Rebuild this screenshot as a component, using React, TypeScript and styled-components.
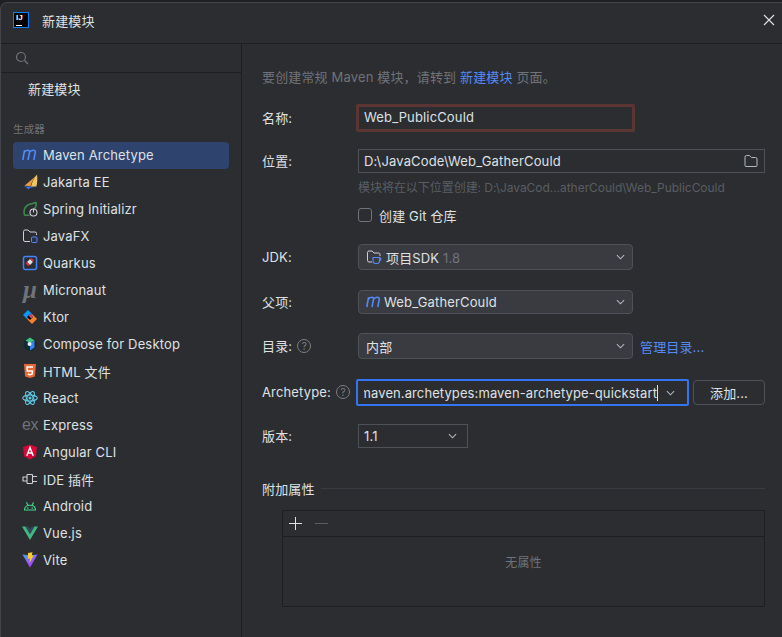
import React from 'react';
import styled, {createGlobalStyle} from 'styled-components';

const GlobalStyle = createGlobalStyle`
  html, body {
    margin: 0;
    height: 100%;
    overflow: hidden;
    background: #1e1f22;
  }
  body {
    font-family: Inter, 'Noto Sans CJK SC', sans-serif;
    font-size: 13px;
    letter-spacing: 0.15px;
    color: #dfe1e5;
  }
`;

const Dialog = styled.div`
  width: 782px;
  height: 635px;
  margin-top: 2px;
  box-sizing: border-box;
  background: #2b2d30;
  border-top: 1px solid #43454a;
  border-left: 1px solid #43454a;
  border-top-left-radius: 7px;
  display: flex;
  flex-direction: column;
  overflow: hidden;
`;

const TitleBar = styled.header`
  height: 40px;
  flex: none;
  box-sizing: content-box;
  display: flex;
  align-items: center;
  padding: 0 6px 3px 12px;
  margin-top: -3px;
  gap: 13px;
  border-bottom: 1px solid #1e1f22;
`;

const TitleText = styled.span`
  flex: 1;
`;

const Logo = styled.div`
  width: 16px;
  height: 16px;
  box-sizing: border-box;
  border: 1.5px solid #087cfa;
  background: #000;
  color: #fff;
  font: 700 8px/8px 'Liberation Sans', sans-serif;
  letter-spacing: 0;
  padding: 1px 0 0 2px;
  position: relative;
  &::after {
    content: '';
    position: absolute;
    left: 2px;
    bottom: 1px;
    width: 6px;
    height: 1px;
    background: #fff;
  }
`;

const Body = styled.div`
  flex: 1;
  display: flex;
  min-height: 0;
`;

const Sidebar = styled.aside`
  width: 240px;
  flex: none;
  border-right: 1px solid #1e1f22;
  display: flex;
  flex-direction: column;
`;

const SearchBox = styled.div`
  height: 28px;
  display: flex;
  align-items: center;
  padding-left: 14px;
  border-bottom: 1px solid #1e1f22;
`;

const TopItem = styled.div`
  padding: 6px 0 0 27px;
  line-height: 20px;
`;

const GroupLabel = styled.div`
  margin: 24px 0 0 12px;
  font-size: 10.5px;
  line-height: 14px;
  color: #6f737a;
`;

const GeneratorList = styled.ul`
  list-style: none;
  margin: 5px 12px 0;
  padding: 0;
`;

const GeneratorRow = styled.li<{$selected?: boolean}>`
  height: 27px;
  box-sizing: border-box;
  display: flex;
  align-items: center;
  gap: 5px;
  padding: 0 0 1px 9px;
  border-radius: 4px;
  background: ${(p) => (p.$selected ? '#2e436e' : 'transparent')};
`;

const IconSlot = styled.span`
  width: 16px;
  height: 16px;
  flex: none;
  display: flex;
  align-items: center;
  justify-content: center;
`;

const MicroGlyph = styled.span`
  font: italic 700 25px/12px 'Liberation Serif', serif;
  letter-spacing: 0;
  color: #6f737a;
`;

const ExGlyph = styled.span`
  font: 400 16px/16px 'Liberation Sans', sans-serif;
  letter-spacing: -0.5px;
  color: #6f737a;
`;

const Main = styled.main`
  flex: 1;
  display: flex;
  flex-direction: column;
  padding: 23px 17px 0 20px;
`;

const Notice = styled.p`
  margin: 0;
  height: 20px;
  line-height: 20px;
  color: #6f737a;
`;

const Link = styled.span`
  color: #548af7;
`;

const Row = styled.div<{$top: number; $height: number}>`
  display: grid;
  grid-template-columns: 96px 1fr;
  align-items: stretch;
  height: ${(p) => p.$height}px;
  margin-top: ${(p) => p.$top}px;
`;

const Label = styled.label`
  display: flex;
  align-items: center;
  gap: 5px;
  padding-bottom: 1px;
`;

const HelpMark = styled.span`
  width: 14px;
  height: 14px;
  box-sizing: border-box;
  border: 1px solid #7a7e85;
  border-radius: 50%;
  color: #7a7e85;
  font-size: 10px;
  line-height: 12px;
  letter-spacing: 0;
  text-align: center;
`;

const NameInput = styled.div`
  margin-left: -2px;
  width: 279px;
  box-sizing: border-box;
  border: 3px solid #5b3434;
  border-radius: 2px;
  padding-left: 5px;
  line-height: 20px;
`;

const PathInput = styled.div`
  box-sizing: border-box;
  border: 1px solid #4e5157;
  padding: 0 5px;
  display: flex;
  align-items: center;
  justify-content: space-between;
`;

const Hint = styled.div`
  margin: 5px 0 0 96px;
  height: 20px;
  line-height: 20px;
  font-size: 12px;
  letter-spacing: -0.04px;
  color: #5a5d63;
`;

const CheckLine = styled.label`
  margin: 7px 0 0 96px;
  height: 20px;
  display: flex;
  align-items: center;
  gap: 7px;
`;

const CheckBox = styled.span`
  width: 14px;
  height: 14px;
  box-sizing: border-box;
  border: 1px solid #6f737a;
  border-radius: 3px;
`;

const Inline = styled.div`
  display: flex;
  align-items: center;
  gap: 7px;
`;

const Combo = styled.div<{$width: number; $flat?: boolean}>`
  width: ${(p) => p.$width}px;
  height: 100%;
  box-sizing: border-box;
  display: flex;
  align-items: center;
  gap: 4px;
  padding: 0 ${(p) => (p.$flat ? 10 : 7)}px 0 ${(p) => (p.$flat ? 5 : 7)}px;
  border: 1px solid #4e5157;
  border-radius: ${(p) => (p.$flat ? 0 : 4)}px;
  background: ${(p) => (p.$flat ? 'transparent' : '#393b40')};
`;

const ComboText = styled.span`
  flex: 1;
  white-space: nowrap;
`;

const ParentIcon = styled.span`
  display: flex;
  margin-right: -2px;
`;

const Muted = styled.span`
  color: #6f737a;
`;

const FocusCombo = styled.div`
  margin-left: -2px;
  width: 333px;
  box-sizing: border-box;
  display: flex;
  align-items: center;
  border: 2px solid #3574f0;
  border-radius: 2px;
  padding: 0 11px 0 6px;
`;

const ScrolledText = styled.div`
  width: 294px;
  flex: none;
  display: flex;
  justify-content: flex-end;
  overflow: hidden;
  white-space: nowrap;
  letter-spacing: 0.1px;
  margin-right: 8px;
`;

const Caret = styled.span`
  flex: none;
  width: 1px;
  height: 16px;
  background: #dfe1e5;
`;

const ArchetypeLine = styled.div`
  display: flex;
  align-items: stretch;
  gap: 4px;
`;

const AddButton = styled.button`
  width: 72px;
  height: 25px;
  margin-top: 1px;
  padding: 0;
  box-sizing: border-box;
  font: inherit;
  letter-spacing: inherit;
  color: inherit;
  background: transparent;
  border: 1px solid #4e5157;
  border-radius: 4px;
`;

const Section = styled.div`
  margin-top: 30px;
  height: 20px;
  display: flex;
  align-items: center;
  gap: 6px;
`;

const SectionLine = styled.span`
  flex: 1;
  height: 1px;
  background: #393b40;
`;

const PropsTable = styled.div`
  margin: 12px 0 0 20px;
  height: 97px;
  box-sizing: border-box;
  border: 1px solid #1e1f22;
  display: flex;
  flex-direction: column;
`;

const PropsToolbar = styled.div`
  height: 26px;
  flex: none;
  box-sizing: border-box;
  border-bottom: 1px solid #1e1f22;
  display: flex;
  align-items: center;
  gap: 13px;
  padding-left: 6px;
`;

const ToolIcon = styled.svg`
  width: 13px;
  height: 13px;
`;

const EmptyText = styled.div`
  flex: 1;
  display: flex;
  align-items: center;
  justify-content: center;
  padding-bottom: 20px;
  font-size: 12px;
  color: #6f737a;
`;

const Chevron = () => (
  <svg width="9" height="6" viewBox="0 0 10 6" fill="none">
    <path d="M1 1l4 4 4-4" stroke="#b4b8bf" strokeWidth="1.200" />
  </svg>
);

const MavenIcon = () => (
  <svg width="16" height="16" viewBox="0 0 16 16" fill="none">
    <path
      d="M.8 13L2.600 3.200M2.400 5.200C3.800 2.800 7.800 2.400 7.500 5.200L6 13M7.700 5.200C9 2.800 13.600 2.400 13.300 5.200L11.800 13"
      stroke="#548af7"
      strokeWidth="1.600"
    />
  </svg>
);

const Svg: React.FC<{children: React.ReactNode}> = ({children}) => (
  <svg width="16" height="16" viewBox="0 0 16 16" fill="none">
    {children}
  </svg>
);

const JakartaIcon = () => (
  <Svg>
    <path d="M2.500 11.500C6 8.500 11 5 15 .5 12 4 9.500 8 8.500 12.500z" fill="#e8973f" />
    <path d="M15 .5c.6 4 .4 8-.6 12l-5.400.2C10 8 12 4 15 .5z" fill="#f0c75e" />
    <path d="M.8 12.500l13.500.2-6 1-2 1.800-2-2z" fill="#3574f0" />
  </Svg>
);

const SpringIcon = () => (
  <Svg>
    <path
      d="M14 1c.5 3.500-.5 6-2 6.500M14 1C12.500 3 9 2.500 6 4 2.500 6 1.500 10 2.500 14c2 .5 3.500.4 5 .2"
      stroke="#3e8a4e"
      strokeWidth="1.500"
    />
    <circle cx="11.500" cy="11.500" r="3.500" stroke="#ced0d6" strokeWidth="1.100" />
    <path d="M11.500 7.500v4" stroke="#ced0d6" strokeWidth="1.100" />
  </Svg>
);

const FolderBlueIcon = () => (
  <Svg>
    <path
      d="M8 13.500H3a1.500 1.500 0 01-1.500-1.500V3.500A1.500 1.500 0 013 2h3l2 2h5a1.500 1.500 0 011.500 1.500V7"
      stroke="#ced0d6"
      strokeWidth="1"
    />
    <rect x="9.500" y="9" width="5.500" height="5.500" rx="1" fill="#25324d" stroke="#548af7" />
  </Svg>
);

const QuarkusIcon = () => (
  <Svg>
    <rect x="1.500" y="1.500" width="13" height="13" rx="2" stroke="#4682fa" strokeWidth="1.500" />
    <path d="M8 4l3 3-3 3-3-3z" fill="#e0e0e0" />
    <path d="M5 7l3 3-2 1-2.500-3z" fill="#d8334a" />
    <path d="M8 4l3 3 1-2-3-2z" fill="#d8334a" />
    <path d="M7 13l2-2 2 2z" fill="#2b2d30" />
  </Svg>
);

const KtorIcon = () => (
  <Svg>
    <path d="M1 6l5-5 4.500 4.500-5 5z" fill="#0a9bf5" />
    <path d="M5.500 10.500l5-5L15 10l-5 5z" fill="#f5822a" />
    <path d="M5 8l3-3 3 3-3 3z" fill="#000" />
    <path d="M8 5l3 3-1.500 1.500-3-3z" fill="#d9477e" />
  </Svg>
);

const ComposeIcon = () => (
  <Svg>
    <circle cx="8" cy="8.500" r="6.500" fill="#0f2a33" />
    <path d="M3.500 4.500L8 1.500l4.500 3L8 7z" fill="#3fc67a" />
    <path d="M12.500 4.500v7L8 14.500V7z" fill="#3b82f0" />
    <circle cx="7.500" cy="8" r="2" fill="#e8eef5" />
  </Svg>
);

const HtmlIcon = () => (
  <Svg>
    <path d="M2 1h12l-1.100 12.400L8 15l-4.900-1.600z" fill="#e3683a" />
    <path d="M11 4H5l.3 4h5.200l-.3 3L8 11.800 5.800 11" stroke="#fff" strokeWidth="1.400" />
  </Svg>
);

const ReactIcon = () => (
  <Svg>
    <g stroke="#61c8e4" strokeWidth="1.100">
      <ellipse cx="8" cy="8" rx="7.300" ry="3" />
      <ellipse cx="8" cy="8" rx="7.300" ry="3" transform="rotate(60 8 8)" />
      <ellipse cx="8" cy="8" rx="7.300" ry="3" transform="rotate(120 8 8)" />
    </g>
    <circle cx="8" cy="8" r="1.500" fill="#61c8e4" />
  </Svg>
);

const AngularIcon = () => (
  <Svg>
    <path d="M8 .7L15 3l-1.100 9.300L8 15.500l-5.900-3.200L1 3z" fill="#d9063a" />
    <path d="M4.800 11.800L8 3.500l3.200 8.300M6 9h4" stroke="#fff" strokeWidth="1.500" />
  </Svg>
);

const PluginIcon = () => (
  <Svg>
    <path
      d="M5 3.500h5.500M5 12.500h5.500M5 3.500v9M5 6H1v4h4M10.500 3.500v9M10.500 5.500H15M10.500 10.500H15"
      stroke="#ced0d6"
      strokeWidth="1.100"
    />
  </Svg>
);

const AndroidIcon = () => (
  <Svg>
    <path
      d="M2.500 12c0-3 2.400-4.800 5.500-4.800s5.500 1.800 5.500 4.800zM4.500 4.200L6 7.400M11.500 4.200L10 7.400"
      stroke="#3ddc84"
      strokeWidth="1.100"
    />
    <circle cx="5.800" cy="10" r=".8" fill="#3ddc84" />
    <circle cx="10.200" cy="10" r=".8" fill="#3ddc84" />
  </Svg>
);

const VueIcon = () => (
  <Svg>
    <path d="M0 1.500h3.500L8 9l4.500-7.500H16L8 15z" fill="#41b883" />
    <path d="M3.500 1.500h2.800L8 4.500l1.700-3h2.800L8 9z" fill="#35495e" />
  </Svg>
);

const ViteIcon = () => (
  <Svg>
    <defs>
      <linearGradient id="viteBody" x1="0" y1="0" x2="0.6" y2="1">
        <stop offset="0" stopColor="#41a5ee" />
        <stop offset="1" stopColor="#bd34fe" />
      </linearGradient>
    </defs>
    <path d="M.5 2.500l6 .8 5-.3 4-.5L8 15.500z" fill="url(#viteBody)" />
    <path d="M6 1L10.500.3 9.800 3.500l2-.3L7.500 11 8 6.500l-2.200.3z" fill="#ffcb2e" />
  </Svg>
);

const GENERATORS = [
  {name: 'Maven Archetype', icon: <MavenIcon />},
  {name: 'Jakarta EE', icon: <JakartaIcon />},
  {name: 'Spring Initializr', icon: <SpringIcon />},
  {name: 'JavaFX', icon: <FolderBlueIcon />},
  {name: 'Quarkus', icon: <QuarkusIcon />},
  {name: 'Micronaut', icon: <MicroGlyph>μ</MicroGlyph>},
  {name: 'Ktor', icon: <KtorIcon />},
  {name: 'Compose for Desktop', icon: <ComposeIcon />},
  {name: 'HTML 文件', icon: <HtmlIcon />},
  {name: 'React', icon: <ReactIcon />},
  {name: 'Express', icon: <ExGlyph>ex</ExGlyph>},
  {name: 'Angular CLI', icon: <AngularIcon />},
  {name: 'IDE 插件', icon: <PluginIcon />},
  {name: 'Android', icon: <AndroidIcon />},
  {name: 'Vue.js', icon: <VueIcon />},
  {name: 'Vite', icon: <ViteIcon />},
];

const App: React.FC = () => {
  return (
    <>
      <GlobalStyle />
      <Dialog>
        <TitleBar>
          <Logo>IJ</Logo>
          <TitleText>新建模块</TitleText>
          <svg width="14" height="14" viewBox="0 0 14 14" fill="none">
            <path d="M2 2l10 10M12 2L2 12" stroke="#dfe1e5" strokeWidth="1.100" />
          </svg>
        </TitleBar>
        <Body>
          <Sidebar>
            <SearchBox>
              <svg width="14" height="14" viewBox="0 0 14 14" fill="none">
                <circle cx="6" cy="6" r="4.500" stroke="#6f737a" strokeWidth="1.200" />
                <path d="M9.500 9.500L13 13" stroke="#6f737a" strokeWidth="1.200" />
              </svg>
            </SearchBox>
            <TopItem>新建模块</TopItem>
            <GroupLabel>生成器</GroupLabel>
            <GeneratorList>
              {GENERATORS.map((g, i) => (
                <GeneratorRow key={g.name} $selected={i === 0}>
                  <IconSlot>{g.icon}</IconSlot>
                  {g.name}
                </GeneratorRow>
              ))}
            </GeneratorList>
          </Sidebar>
          <Main>
            <Notice>
              要创建常规 Maven 模块，请转到 <Link>新建模块</Link> 页面。
            </Notice>
            <Row $top={17} $height={28}>
              <Label>名称:</Label>
              <NameInput>Web_PublicCould</NameInput>
            </Row>
            <Row $top={17} $height={24}>
              <Label>位置:</Label>
              <PathInput>
                D:\JavaCode\Web_GatherCould
                <svg width="16" height="16" viewBox="0 0 16 16" fill="none">
                  <path
                    d="M2 12.500V4a1.500 1.500 0 011.500-1.500h3l2 2h4A1.500 1.500 0 0114 6v6.500a1 1 0 01-1 1H3a1 1 0 01-1-1z"
                    stroke="#b4b8bf"
                  />
                </svg>
              </PathInput>
            </Row>
            <Hint>模块将在以下位置创建: D:\JavaCod...atherCould\Web_PublicCould</Hint>
            <CheckLine>
              <CheckBox />
              创建 Git 仓库
            </CheckLine>
            <Row $top={19} $height={26}>
              <Label>JDK:</Label>
              <Combo $width={275}>
                <svg width="16" height="16" viewBox="0 0 16 16" fill="none">
                  <path
                    d="M6 13H3a1.500 1.500 0 01-1.500-1.500V3.500A1.500 1.500 0 013 2h3l2 2h4.500A1.500 1.500 0 0114 5.500V7"
                    stroke="#ced0d6"
                  />
                  <path
                    d="M7 8.500h6.500V12a2.500 2.500 0 01-2.500 2.500H9.500A2.500 2.500 0 017 12zM13.500 9h1.200v2.200h-1.200"
                    stroke="#548af7"
                    strokeWidth="1.100"
                  />
                </svg>
                <ComboText>
                  项目SDK <Muted>1.8</Muted>
                </ComboText>
                <Chevron />
              </Combo>
            </Row>
            <Row $top={20} $height={24}>
              <Label>父项:</Label>
              <Combo $width={275}>
                <ParentIcon>
                  <MavenIcon />
                </ParentIcon>
                <ComboText>Web_GatherCould</ComboText>
                <Chevron />
              </Combo>
            </Row>
            <Row $top={19} $height={26}>
              <Label>
                目录:
                <HelpMark>?</HelpMark>
              </Label>
              <Inline>
                <Combo $width={275}>
                  <ComboText>内部</ComboText>
                  <Chevron />
                </Combo>
                <Link>管理目录...</Link>
              </Inline>
            </Row>
            <Row $top={20} $height={27}>
              <Label>
                Archetype:
                <HelpMark>?</HelpMark>
              </Label>
              <ArchetypeLine>
                <FocusCombo>
                  <ScrolledText>
                    maven.archetypes:maven-archetype-quickstart
                    <Caret />
                  </ScrolledText>
                  <Chevron />
                </FocusCombo>
                <AddButton>添加...</AddButton>
              </ArchetypeLine>
            </Row>
            <Row $top={18} $height={24}>
              <Label>版本:</Label>
              <Combo $width={110} $flat>
                <ComboText>1.1</ComboText>
                <Chevron />
              </Combo>
            </Row>
            <Section>
              附加属性
              <SectionLine />
            </Section>
            <PropsTable>
              <PropsToolbar>
                <ToolIcon viewBox="0 0 13 13" fill="none">
                  <path d="M6.500 0v13M0 6.500h13" stroke="#dfe1e5" />
                </ToolIcon>
                <ToolIcon viewBox="0 0 13 13" fill="none">
                  <path d="M0 6.500h13" stroke="#5a5d63" />
                </ToolIcon>
              </PropsToolbar>
              <EmptyText>无属性</EmptyText>
            </PropsTable>
          </Main>
        </Body>
      </Dialog>
    </>
  );
};

export default App;
